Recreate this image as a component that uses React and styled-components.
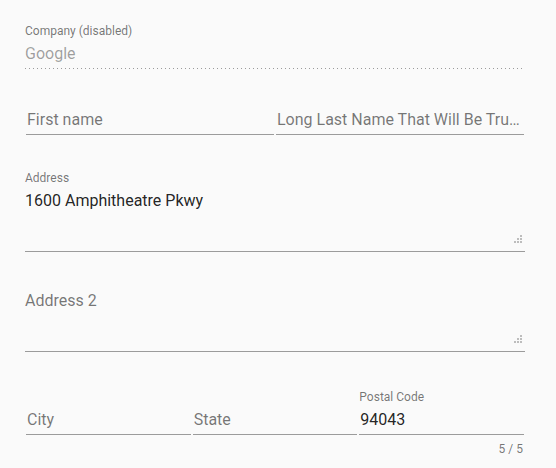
import React from 'react';
import styled, { createGlobalStyle } from 'styled-components';

const GlobalStyle = createGlobalStyle`
    html, body {
        margin: 0;
        padding: 0;
        background: #fafafa;
        font-family: Roboto, "Noto Sans", sans-serif;
    }
`

const Form = styled.div`
    width: 500px;
    padding: 24px 0 0 25px;
`
const Field = styled.div`
    position: relative;
    margin-top: ${props => props.top || 0}px;
    min-width: 0;
`
const Row = styled.div`
    display: flex;
    gap: 2px;
    padding: 0 1px;
    margin-top: ${props => props.top || 0}px;
    & > ${Field} {
        flex: 1;
    }
`
const Label = styled.div`
    font-size: 12px;
    line-height: 14px;
    height: 15px;
    color: rgba(0, 0, 0, 0.54);
    white-space: nowrap;
`
const Input = styled.div`
    box-sizing: border-box;
    position: relative;
    height: ${props => props.height || 30}px;
    padding: 2px 2px 1px ${props => props.inset || 0}px;
    font-size: 16px;
    line-height: 26px;
    color: ${props => props.placeholder ? 'rgba(0, 0, 0, 0.54)' : 'rgba(0, 0, 0, 0.87)'};
    border-bottom: 1px solid rgba(0, 0, 0, 0.38);
    white-space: nowrap;
    overflow: hidden;
    text-overflow: ellipsis;
`
const DisabledInput = styled(Input)`
    color: rgba(0, 0, 0, 0.38);
    border-bottom: none;
    background-image: linear-gradient(to right, rgba(0, 0, 0, 0.38) 0%, rgba(0, 0, 0, 0.38) 33%, transparent 0%);
    background-size: 4px 1px;
    background-repeat: repeat-x;
    background-position: left bottom;
`
const Resizer = styled.svg`
    position: absolute;
    right: 3px;
    bottom: 8px;
`
const Counter = styled.div`
    margin-top: 7px;
    padding-right: 1px;
    text-align: right;
    font-size: 12px;
    line-height: 14px;
    color: rgba(0, 0, 0, 0.54);
`

const Grip = () => (
    <Resizer width="8" height="8" viewBox="0 0 8 8">
        {[[6, 0], [3, 3], [6, 3], [0, 6], [3, 6], [6, 6]].map(([x, y]) => (
            <rect key={`${x}-${y}`} x={x} y={y} width="2" height="2" fill="#bdbdbd" />
        ))}
    </Resizer>
);

const App = () => {
    return (
        <>
            <GlobalStyle />
            <Form>
                <Field>
                    <Label>Company (disabled)</Label>
                    <DisabledInput>Google</DisabledInput>
                </Field>
                <Row top={36}>
                    <Field>
                        <Input placeholder inset={1}>First name</Input>
                    </Field>
                    <Field>
                        <Input placeholder inset={1}>Long Last Name That Will Be Truncated</Input>
                    </Field>
                </Row>
                <Field top={36}>
                    <Label>Address</Label>
                    <Input height={66}>
                        1600 Amphitheatre Pkwy
                        <Grip />
                    </Input>
                </Field>
                <Field top={34}>
                    <Input height={66} placeholder>
                        Address 2
                        <Grip />
                    </Input>
                </Field>
                <Row top={38}>
                    <Field>
                        <Label>&nbsp;</Label>
                        <Input placeholder inset={1}>City</Input>
                    </Field>
                    <Field>
                        <Label>&nbsp;</Label>
                        <Input placeholder inset={1}>State</Input>
                    </Field>
                    <Field>
                        <Label>Postal Code</Label>
                        <Input inset={1}>94043</Input>
                        <Counter>5 / 5</Counter>
                    </Field>
                </Row>
            </Form>
        </>
    );
};

export default App;
